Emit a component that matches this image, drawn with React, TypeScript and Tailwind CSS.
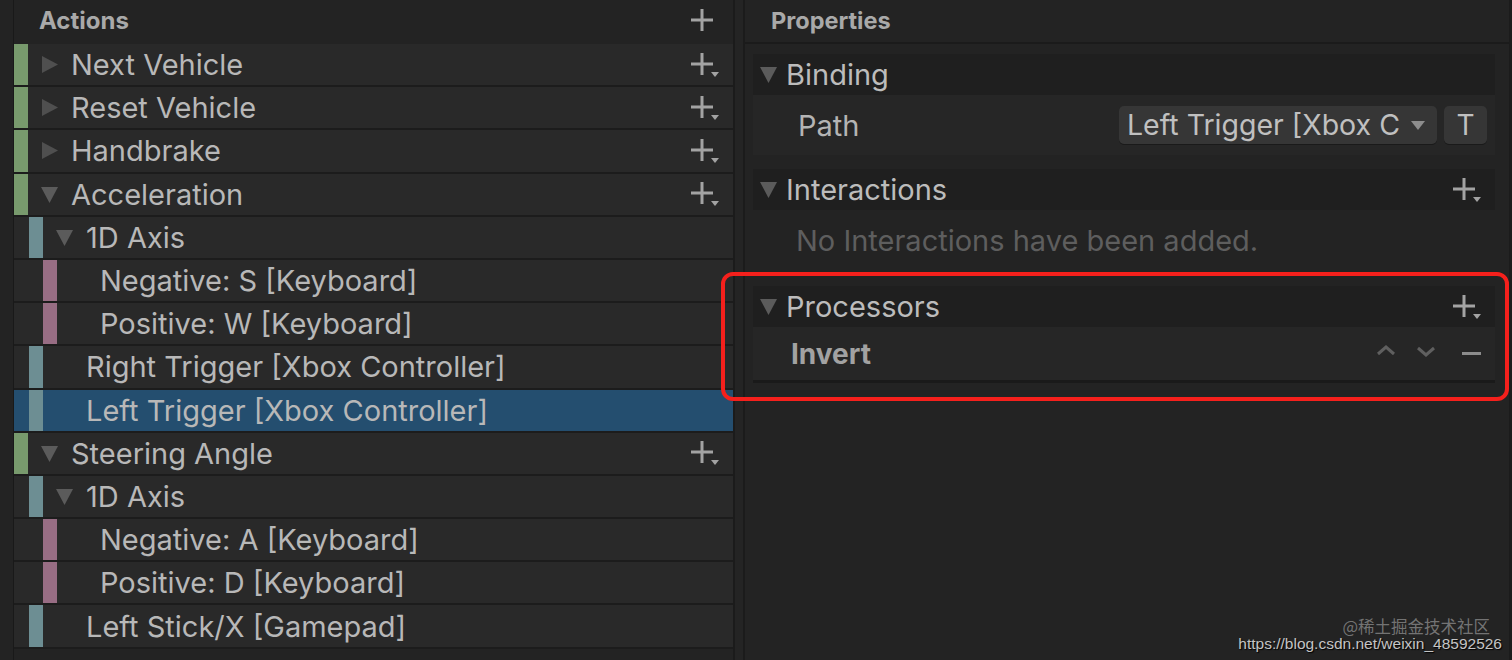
import React from 'react'

type Row = {
  label: string
  depth: 0 | 1 | 2
  kind: 'action' | 'composite' | 'binding' | 'part'
  open?: boolean
  selected?: boolean
}

const rows: Row[] = [
  { label: 'Next Vehicle', depth: 0, kind: 'action' },
  { label: 'Reset Vehicle', depth: 0, kind: 'action' },
  { label: 'Handbrake', depth: 0, kind: 'action' },
  { label: 'Acceleration', depth: 0, kind: 'action', open: true },
  { label: '1D Axis', depth: 1, kind: 'composite', open: true },
  { label: 'Negative: S [Keyboard]', depth: 2, kind: 'part' },
  { label: 'Positive: W [Keyboard]', depth: 2, kind: 'part' },
  { label: 'Right Trigger [Xbox Controller]', depth: 1, kind: 'binding' },
  { label: 'Left Trigger [Xbox Controller]', depth: 1, kind: 'binding', selected: true },
  { label: 'Steering Angle', depth: 0, kind: 'action', open: true },
  { label: '1D Axis', depth: 1, kind: 'composite', open: true },
  { label: 'Negative: A [Keyboard]', depth: 2, kind: 'part' },
  { label: 'Positive: D [Keyboard]', depth: 2, kind: 'part' },
  { label: 'Left Stick/X [Gamepad]', depth: 1, kind: 'binding' },
]

const font = { fontFamily: 'Inter, "Noto Sans", sans-serif' }

function Plus({ menu = true }: { menu?: boolean }) {
  return (
    <svg width="30" height="28" viewBox="0 0 30 28" className="shrink-0">
      <path d="M11 2v22M0 13h22" stroke="#a3a3a3" strokeWidth="3" />
      {menu && <path d="M20 21h8l-4 5z" fill="#a3a3a3" />}
    </svg>
  )
}

function Triangle({ open }: { open?: boolean }) {
  return (
    <svg width="17" height="17" viewBox="0 0 17 17" className="shrink-0">
      {open ? <path d="M0 1h17l-8.5 16z" fill="#5b5b5b" /> : <path d="M1 0l16 8.5L1 17z" fill="#4f4f4f" />}
    </svg>
  )
}

function TreeRow({ row }: { row: Row }) {
  const bar =
    row.kind === 'action' ? 'bg-[#789a6d]' : row.kind === 'part' ? 'bg-[#986d84]' : 'bg-[#6d8e93]'
  const pad = row.depth === 0 ? 'pl-0' : row.depth === 1 ? 'pl-[15px]' : 'pl-[29px]'
  return (
    <div
      className={`flex h-[43.2px] items-stretch border-b-2 border-[#1c1c1c] ${pad} ${
        row.selected ? 'bg-[#244e6f]' : 'bg-[#292929]'
      }`}
    >
      <div className={`w-[14px] shrink-0 ${bar}`} />
      <div className="flex flex-1 items-center pl-[13px] pr-[12px]">
        <div className="w-[17px] shrink-0">
          {(row.kind === 'action' || row.kind === 'composite') && <Triangle open={row.open} />}
        </div>
        <span className="ml-[13px] whitespace-nowrap text-[29px] leading-none text-[#b8b8b8]">{row.label}</span>
        <div className="flex-1" />
        {row.kind === 'action' && <Plus />}
      </div>
    </div>
  )
}

function SectionHeader({ title, plus }: { title: string; plus?: boolean }) {
  return (
    <div className="flex h-[41px] items-center bg-[#1f1f1f] pl-[7px] pr-[12px]">
      <Triangle open />
      <span className="ml-[9px] text-[29px] leading-none text-[#bcbcbc]">{title}</span>
      <div className="flex-1" />
      {plus && <Plus />}
    </div>
  )
}

export default function App() {
  return (
    <div className="relative flex h-[660px] w-[1512px] overflow-hidden bg-[#232323]" style={font}>
      {/* Actions tree */}
      <div className="flex w-[14px] shrink-0 border-r border-[#191919]" />
      <div className="flex w-[719px] shrink-0 flex-col">
        <div className="flex h-[44px] shrink-0 items-center pb-[3px] pl-[25px] pr-[12px]">
          <span className="text-[24px] font-bold text-[#a9a9a9]">Actions</span>
          <div className="flex-1" />
          <Plus menu={false} />
        </div>
        {rows.map((r, i) => (
          <TreeRow key={i} row={r} />
        ))}
      </div>

      {/* Divider */}
      <div className="w-[12px] shrink-0 border-l-2 border-r-2 border-[#1b1b1b] bg-[#242424]" />

      {/* Properties */}
      <div className="flex flex-1 flex-col">
        <div className="flex h-[44px] items-center border-b-2 border-[#1b1b1b] pl-[26px]">
          <span className="text-[23.5px] font-bold text-[#a9a9a9]">Properties</span>
        </div>
        <div className="flex flex-col px-[8px] pr-[14px] pt-[10px]">
          <SectionHeader title="Binding" />
          <div className="flex h-[60px] items-center bg-[#262626] pl-[45px] pr-[8px]">
            <span className="text-[29px] leading-none text-[#b4b4b4]">Path</span>
            <div className="flex-1" />
            <div className="flex h-[38px] w-[318px] items-center overflow-hidden rounded-[5px] bg-[#363636] pl-[8px] pr-[12px] shadow-[0_1px_0_#1a1a1a]">
              <span className="whitespace-nowrap text-[28.5px] leading-none text-[#c0c0c0]">Left Trigger [Xbox C</span>
              <div className="flex-1" />
              <svg width="14" height="9" viewBox="0 0 14 9" className="shrink-0">
                <path d="M0 0h14l-7 9z" fill="#8d8d8d" />
              </svg>
            </div>
            <div className="ml-[7px] flex h-[38px] w-[43px] items-center justify-center rounded-[5px] bg-[#363636] shadow-[0_1px_0_#1a1a1a]">
              <span className="text-[28px] leading-none text-[#c0c0c0]">T</span>
            </div>
          </div>
          <div className="h-[14px]" />
          <SectionHeader title="Interactions" plus />
          <div className="flex h-[60px] items-center pl-[43px]">
            <span className="whitespace-nowrap text-[29px] leading-none text-[#5e5e5e]">No Interactions have been added.</span>
          </div>
          <div className="h-[16px]" />
          <SectionHeader title="Processors" plus />
          <div className="flex h-[56px] items-center border-b-[3px] border-[#1a1a1a] bg-[#262626] pl-[38px] pr-[14px]">
            <span className="text-[28px] font-bold leading-none text-[#a2a2a2]">Invert</span>
            <div className="flex-1" />
            <svg width="20" height="12" viewBox="0 0 20 12" className="mb-[8px]">
              <path d="M2 10l8-7 8 7" stroke="#5f5f5f" strokeWidth="3" fill="none" />
            </svg>
            <svg width="20" height="12" viewBox="0 0 20 12" className="ml-[20px] mb-[4px]">
              <path d="M2 2l8 7 8-7" stroke="#5f5f5f" strokeWidth="3" fill="none" />
            </svg>
            <div className="ml-[26px] h-[3px] w-[19px] bg-[#8c8c8c]" />
          </div>
        </div>
      </div>
      <div className="w-[3px] shrink-0 bg-[#1b1b1b]" />

      {/* Red annotation box */}
      <div className="pointer-events-none absolute left-[721px] top-[272px] h-[129px] w-[788px] rounded-[12px] border-[4px] border-[#f5201c]" />

      {/* Watermark */}
      <div className="pointer-events-none absolute right-[10px] top-[618px] flex flex-col items-end leading-none">
        <div
          className="mr-[12px] h-[16px] text-[16.5px] leading-[16px] text-[#8a8a8a]/80"
          style={{ fontFamily: '"Noto Sans CJK SC", "Noto Sans", sans-serif' }}
        >
          @稀土掘金技术社区
        </div>
        <div
          className="mt-[2px] text-[15.5px] leading-[16px] text-[#c4c4c4]"
          style={{ fontFamily: '"Liberation Sans", Arial, sans-serif', textShadow: '1px 1px 1px #000' }}
        >
          https://blog.csdn.net/weixin_48592526
        </div>
      </div>
    </div>
  )
}
